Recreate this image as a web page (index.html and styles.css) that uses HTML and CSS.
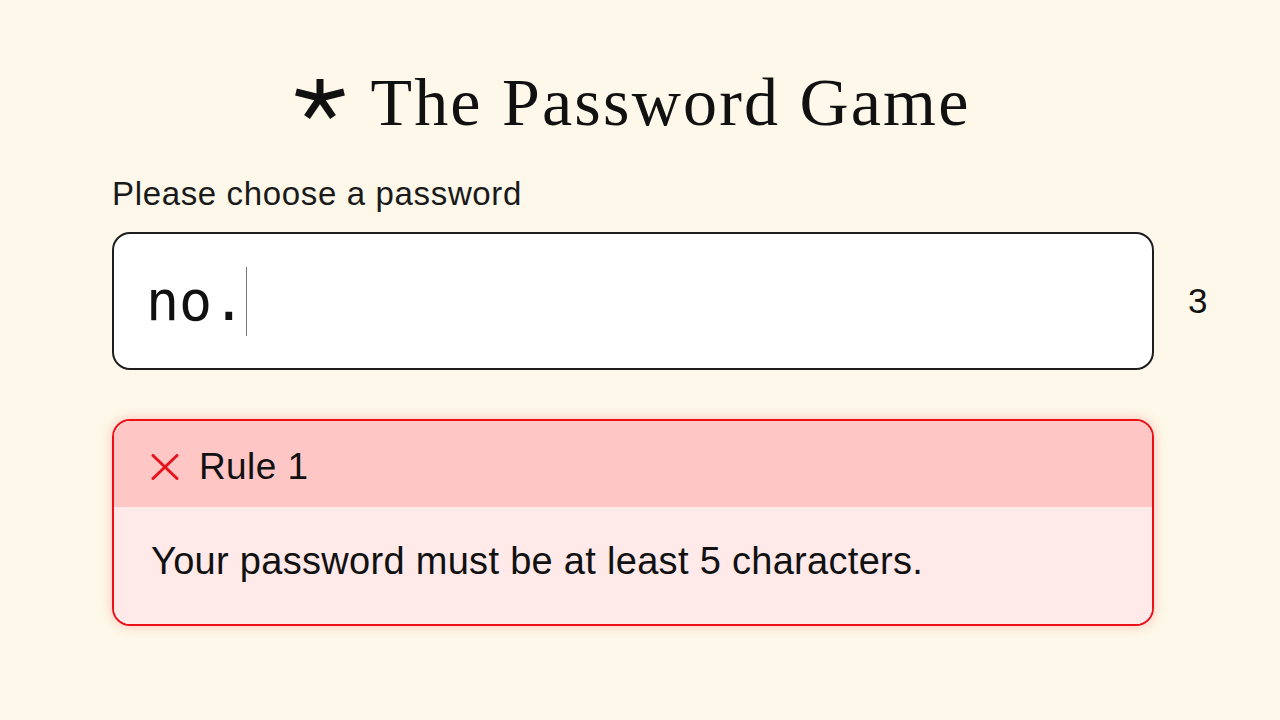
FILE: index.html
```html
<!DOCTYPE html>
<html lang="en">
<head>
<meta charset="utf-8">
<title>The Password Game</title>
<link rel="stylesheet" href="styles.css">
</head>
<body>
<main class="page">
  <h1 class="title">
    <svg class="logo" width="50" height="44" viewBox="0 0 50 44" aria-hidden="true">
      <g stroke="#111" stroke-width="7" stroke-linecap="butt" fill="none">
        <line x1="25" y1="22" x2="25" y2="3"/>
        <line x1="25" y1="22" x2="1" y2="16"/>
        <line x1="25" y1="22" x2="49" y2="16"/>
        <line x1="25" y1="22" x2="12" y2="41"/>
        <line x1="25" y1="22" x2="38" y2="41"/>
      </g>
    </svg>
    <span class="title-text">The Password Game</span>
  </h1>
  <label class="label" for="pw">Please choose a password</label>
  <div class="input-row">
    <div class="input-box" id="pw">
      <span class="pw-text">no.</span><span class="caret"></span>
    </div>
    <span class="counter">3</span>
  </div>
  <section class="rule">
    <div class="rule-head">
      <svg class="rule-x" width="28" height="26" viewBox="0 0 28 26" aria-hidden="true">
        <g stroke="#e5141c" stroke-width="3" stroke-linecap="round">
          <line x1="2" y1="1.5" x2="26" y2="24.5"/>
          <line x1="26" y1="1.5" x2="2" y2="24.5"/>
        </g>
      </svg>
      <span>Rule 1</span>
    </div>
    <div class="rule-body">Your password must be at least 5 characters.</div>
  </section>
</main>
</body>
</html>
```
FILE: styles.css
```css
html, body {
  margin: 0;
  padding: 0;
}
body {
  background: #fdf8e9;
  color: #111;
  font-family: "Liberation Sans", Arial, sans-serif;
  width: 1280px;
  height: 720px;
  overflow: hidden;
}
.page {
  padding: 66px 0 0 112px;
  display: flex;
  flex-direction: column;
  align-items: flex-start;
}
.title {
  width: 1042px;
  margin: 0;
  display: flex;
  justify-content: center;
  align-items: center;
  gap: 25px;
  font-family: "Liberation Serif", "Times New Roman", serif;
  font-weight: normal;
  font-size: 68px;
  line-height: 72px;
  letter-spacing: 2.2px;
  color: #111;
}
.logo {
  margin-bottom: 8px;
  flex: none;
}
.label {
  margin-top: 36px;
  font-size: 33px;
  line-height: 40px;
  letter-spacing: 0.65px;
  color: #1a1a1a;
}
.input-row {
  margin-top: 18px;
  display: flex;
  align-items: center;
  gap: 34px;
}
.input-box {
  box-sizing: border-box;
  width: 1042px;
  height: 138px;
  border: 2px solid #1e1e1e;
  border-radius: 18px;
  background: #fff;
  padding-left: 32px;
  display: flex;
  align-items: center;
}
.pw-text {
  font-family: "DejaVu Sans Mono", "Liberation Mono", monospace;
  font-size: 55px;
  line-height: 70px;
  color: #111;
}
.caret {
  display: block;
  width: 0;
  height: 69px;
  border-left: 1px solid #777;
  margin-left: 1px;
}
.counter {
  font-size: 35px;
  line-height: 40px;
  color: #111;
}
.rule {
  margin-top: 49px;
  box-sizing: border-box;
  width: 1042px;
  border: 2px solid #ec0f17;
  border-radius: 18px;
  overflow: hidden;
  box-shadow: 0 0 12px rgba(255, 60, 60, 0.28);
}
.rule-head {
  background: #ffc6c6;
  padding: 24px 37px 18px 37px;
  display: flex;
  align-items: center;
  gap: 20px;
  font-size: 37px;
  line-height: 44px;
  letter-spacing: 0.4px;
}
.rule-x {
  flex: none;
}
.rule-body {
  background: #ffe9e9;
  padding: 32px 37px 41px 37px;
  font-size: 38px;
  line-height: 44px;
  letter-spacing: 0.3px;
}
```
